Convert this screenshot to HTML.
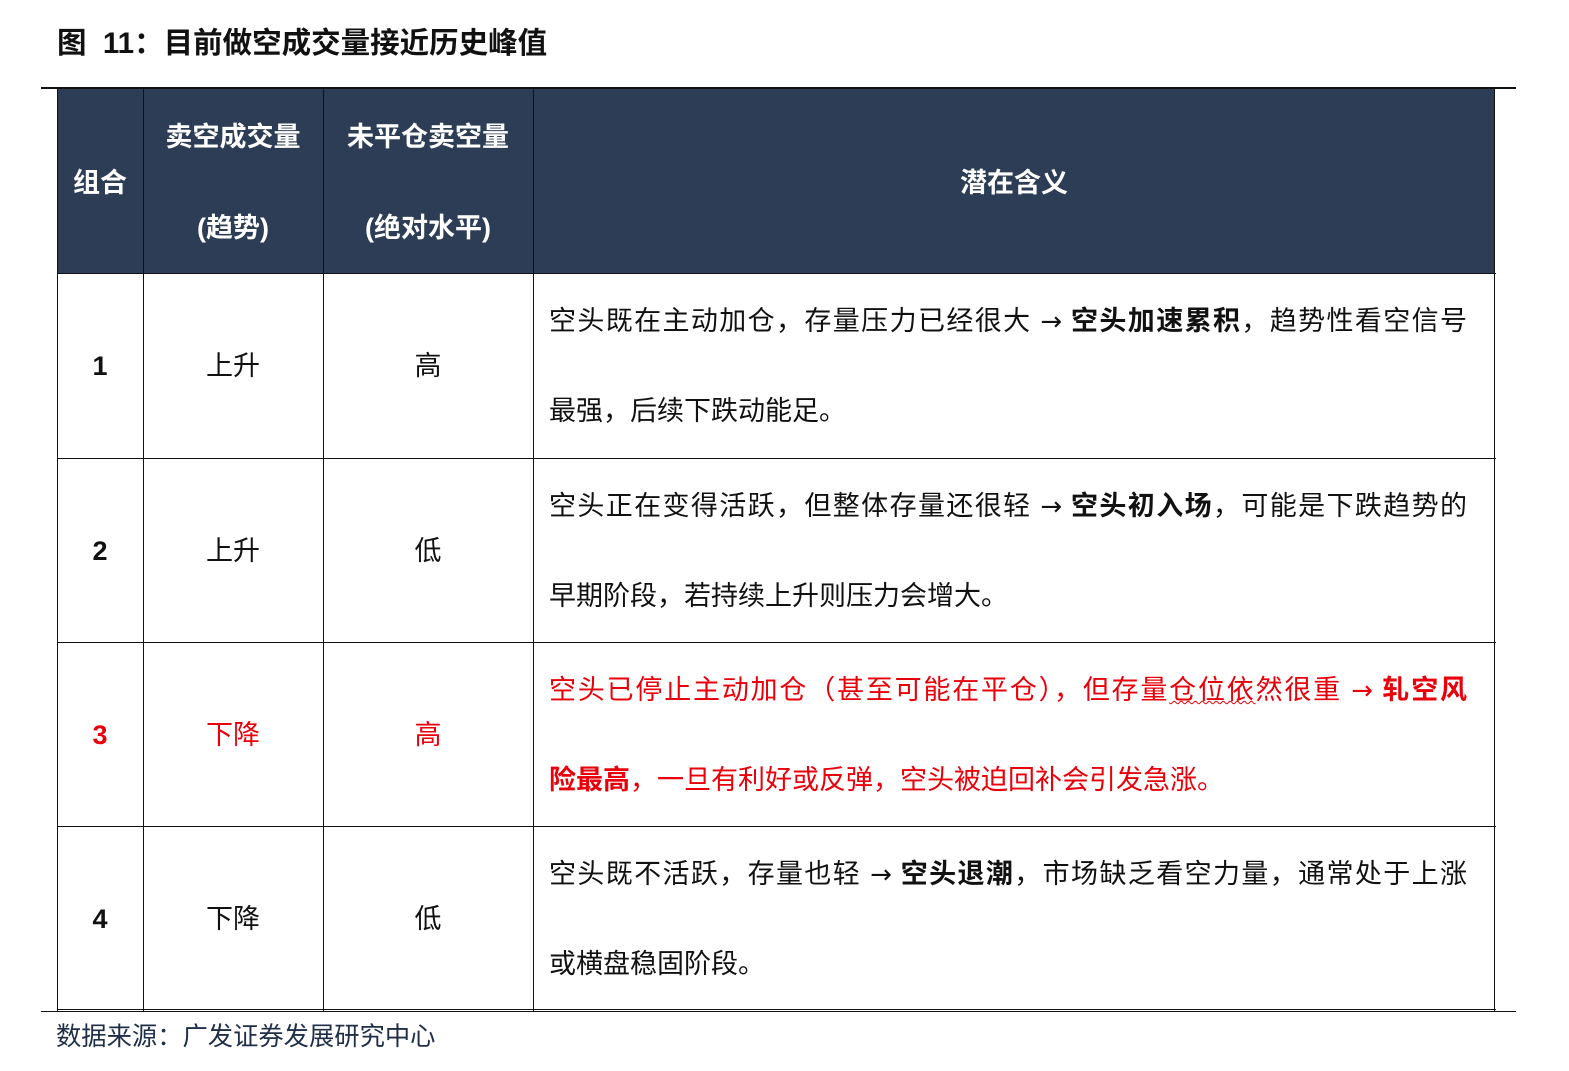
<!DOCTYPE html>
<html><head><meta charset="utf-8"><style>
body{margin:0;width:1569px;height:1071px;background:#fff;position:relative;overflow:hidden;font-family:"Liberation Sans","Noto Sans CJK SC",sans-serif;color:#111}
.a{position:absolute;white-space:nowrap}
.title{left:57px;top:26px;font-size:29.5px;font-weight:bold;line-height:36px}
.rule{position:absolute;left:41px;width:1475px;height:2px;background:#111}
.v{position:absolute;width:1px;background:#111}
.h{position:absolute;height:1px;background:#111;left:57px;width:1439px}
.hd{position:absolute;left:57px;top:89px;width:1438px;height:184px;background:#2c3d55}
.ht{color:#fff;font-weight:bold;font-size:27px;line-height:36px;text-align:center;position:absolute}
.c{position:absolute;font-size:27px;line-height:36px;text-align:center}
.d{position:absolute;left:549px;width:918px;font-size:27px;line-height:36px;text-align:justify;text-align-last:justify;white-space:nowrap}
.d.l{text-align-last:left}
.ar{font-family:"DejaVu Sans",sans-serif;font-size:26px}
.red{color:#e8000b}
</style></head><body>
<div class="a title">图&nbsp; 11：目前做空成交量接近历史峰值</div>
<div class="rule" style="top:87px"></div>
<div class="hd"></div>
<div class="ht" style="left:57px;width:86px;top:165px">组合</div>
<div class="ht" style="left:143px;width:180px;top:119px">卖空成交量</div>
<div class="ht" style="left:143px;width:180px;top:210px">(趋势)</div>
<div class="ht" style="left:323px;width:210px;top:119px">未平仓卖空量</div>
<div class="ht" style="left:323px;width:210px;top:210px">(绝对水平)</div>
<div class="ht" style="left:533px;width:962px;top:165px">潜在含义</div>

<div class="v" style="left:57px;top:89px;height:922px"></div>
<div class="v" style="left:143px;top:89px;height:922px"></div>
<div class="v" style="left:323px;top:89px;height:922px"></div>
<div class="v" style="left:533px;top:89px;height:922px"></div>
<div class="v" style="left:1494px;top:89px;height:922px"></div>
<div class="h" style="top:273px"></div>
<div class="h" style="top:458px"></div>
<div class="h" style="top:642px"></div>
<div class="h" style="top:826px"></div>
<div class="h" style="top:1009px"></div>
<div class="rule" style="top:1011px;height:1px"></div>

<div class="c" style="left:57px;width:86px;top:348px;font-weight:bold">1</div>
<div class="c" style="left:143px;width:180px;top:348px">上升</div>
<div class="c" style="left:323px;width:210px;top:348px">高</div>
<div class="d" style="top:303px">空头既在主动加仓，存量压力已经很大 <span class="ar">→</span> <b>空头加速累积</b>，趋势性看空信号</div>
<div class="d l" style="top:393px">最强，后续下跌动能足。</div>

<div class="c" style="left:57px;width:86px;top:533px;font-weight:bold">2</div>
<div class="c" style="left:143px;width:180px;top:533px">上升</div>
<div class="c" style="left:323px;width:210px;top:533px">低</div>
<div class="d" style="top:488px">空头正在变得活跃，但整体存量还很轻 <span class="ar">→</span> <b>空头初入场</b>，可能是下跌趋势的</div>
<div class="d l" style="top:578px">早期阶段，若持续上升则压力会增大。</div>

<div class="c red" style="left:57px;width:86px;top:717px;font-weight:bold">3</div>
<div class="c red" style="left:143px;width:180px;top:717px">下降</div>
<div class="c red" style="left:323px;width:210px;top:717px">高</div>
<div class="d red" style="top:672px">空头已停止主动加仓（甚至可能在平仓），但存量<span style="text-decoration:underline wavy #e8000b;text-decoration-thickness:1px">仓位依</span>然很重 <span class="ar">→</span> <b>轧空风</b></div>
<div class="d l red" style="top:762px"><b>险最高</b>，一旦有利好或反弹，空头被迫回补会引发急涨。</div>

<div class="c" style="left:57px;width:86px;top:901px;font-weight:bold">4</div>
<div class="c" style="left:143px;width:180px;top:901px">下降</div>
<div class="c" style="left:323px;width:210px;top:901px">低</div>
<div class="d" style="top:856px">空头既不活跃，存量也轻 <span class="ar">→</span> <b>空头退潮</b>，市场缺乏看空力量，通常处于上涨</div>
<div class="d l" style="top:946px">或横盘稳固阶段。</div>

<div class="a" style="left:56px;top:1021px;font-size:25.3px;line-height:32px;color:#1f2f48">数据来源：广发证券发展研究中心</div>
</body></html>
